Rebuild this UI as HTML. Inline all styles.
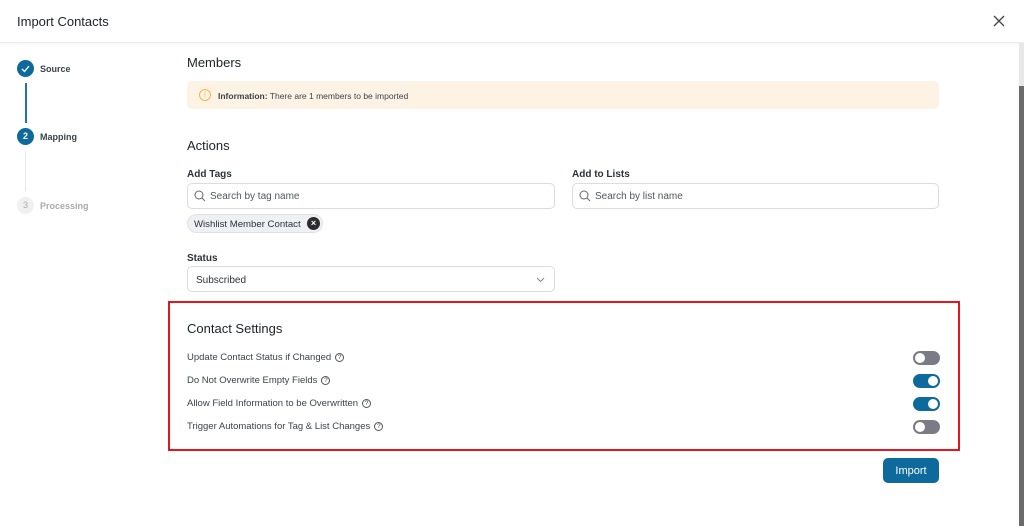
<!DOCTYPE html>
<html><head><style>
*{box-sizing:border-box;margin:0;padding:0}
body{width:1024px;height:526px;overflow:hidden;background:#fff;font-family:"Liberation Sans",sans-serif;color:#1d2327;position:relative}
.abs{position:absolute}
.hdr{left:0;top:0;width:1024px;height:43px;border-bottom:1px solid #ececec;box-shadow:0 2px 4px rgba(0,0,0,.04)}
.t{font-size:13px}
.lbl{font-size:10px;font-weight:bold;color:#2c3338}
.inp{border:1px solid #dcdcde;border-radius:5px;height:26px;background:#fff}
.ph{font-size:10px;color:#50575e}
.tog{width:27px;height:14px;border-radius:7px}
.tog i{position:absolute;top:2px;width:10px;height:10px;border-radius:50%;background:#fff}
.row{font-size:9.5px;color:#3c434a}
.q{display:inline-block;width:9px;height:9px;border:1px solid #555;border-radius:50%;font-size:6.5px;text-align:center;line-height:8px;vertical-align:1px;margin-left:4px}
</style></head><body>
<div class="abs hdr"></div>
<div class="abs t" style="left:17px;top:14px;font-size:13px;color:#1d2327">Import Contacts</div>
<svg class="abs" style="left:993px;top:15px" width="12" height="12"><path d="M1 1L11 11M11 1L1 11" stroke="#444" stroke-width="1.3"/></svg>
<div class="abs" style="left:1019px;top:43px;width:5px;height:483px;background:#e8e8e8"></div>
<div class="abs" style="left:1019px;top:86px;width:5px;height:440px;background:#6b6b6b"></div>

<div class="abs" style="left:17px;top:60px;width:17px;height:17px;border-radius:50%;background:#0e6a9c"></div>
<svg class="abs" style="left:21px;top:64px" width="9" height="9"><path d="M1 5L3.5 7.5L8 2" stroke="#fff" stroke-width="1.3" fill="none"/></svg>
<div class="abs lbl" style="left:40px;top:64px;font-size:9px;color:#3c434a">Source</div>
<div class="abs" style="left:25px;top:83px;width:2px;height:40px;background:#2271b1"></div>
<div class="abs" style="left:17px;top:128px;width:17px;height:17px;border-radius:50%;background:#0e6a9c;color:#fff;font-size:9px;font-weight:bold;text-align:center;line-height:17px">2</div>
<div class="abs lbl" style="left:40px;top:132px;font-size:9px;color:#3c434a">Mapping</div>
<div class="abs" style="left:25px;top:151px;width:1px;height:40px;background:#e6e8ec"></div>
<div class="abs" style="left:17px;top:197px;width:17px;height:17px;border-radius:50%;background:#f0f0f1;color:#a7aaad;font-size:9px;text-align:center;line-height:17px">3</div>
<div class="abs lbl" style="left:40px;top:201px;font-size:9px;color:#a7aaad">Processing</div>

<div class="abs" style="left:187px;top:55px;font-size:13px">Members</div>
<div class="abs" style="left:187px;top:81px;width:752px;height:28px;background:#fdf3e5;border-radius:5px"></div>
<div class="abs" style="left:199px;top:89px;width:12px;height:12px;border:1px solid #f0b849;border-radius:50%;color:#f0b849;font-size:8px;text-align:center;line-height:10px">i</div>
<div class="abs" style="left:218px;top:91px;font-size:8.5px;color:#3c434a"><b>Information:</b> There are 1 members to be imported</div>

<div class="abs" style="left:187px;top:138px;font-size:13px">Actions</div>
<div class="abs lbl" style="left:187px;top:169px">Add Tags</div>
<div class="abs inp" style="left:187px;top:183px;width:368px"></div>
<svg class="abs" style="left:194px;top:190px" width="12" height="12"><circle cx="5" cy="5" r="4" stroke="#666" fill="none"/><path d="M8 8L11 11" stroke="#666"/></svg>
<div class="abs ph" style="left:210px;top:191px">Search by tag name</div>
<div class="abs lbl" style="left:572px;top:169px">Add to Lists</div>
<div class="abs inp" style="left:572px;top:183px;width:367px"></div>
<svg class="abs" style="left:579px;top:190px" width="12" height="12"><circle cx="5" cy="5" r="4" stroke="#666" fill="none"/><path d="M8 8L11 11" stroke="#666"/></svg>
<div class="abs ph" style="left:595px;top:191px">Search by list name</div>
<div class="abs" style="left:187px;top:214px;width:136px;height:19px;border-radius:10px;background:#eef0f3;border:1px solid #e0e2e6"></div>
<div class="abs ph" style="left:194px;top:219px;color:#2c3338;font-size:9.6px">Wishlist Member Contact</div>
<div class="abs" style="left:307px;top:217px;width:13px;height:13px;border-radius:50%;background:#2c2c2c;color:#fff;font-size:9px;text-align:center;line-height:13px;font-weight:bold">×</div>
<div class="abs lbl" style="left:187px;top:253px">Status</div>
<div class="abs inp" style="left:187px;top:266px;width:368px"></div>
<div class="abs ph" style="left:196px;top:275px;color:#2c3338">Subscribed</div>
<svg class="abs" style="left:536px;top:277px" width="9" height="6"><path d="M1 1L4.5 4.5L8 1" stroke="#888" fill="none"/></svg>

<div class="abs" style="left:168px;top:301px;width:792px;height:150px;border:2px solid #e5161d"></div>
<div class="abs" style="left:187px;top:321px;font-size:13px">Contact Settings</div>
<div class="abs row" style="left:187px;top:352px">Update Contact Status if Changed<span class="q">?</span></div>
<div class="abs row" style="left:187px;top:375px">Do Not Overwrite Empty Fields<span class="q">?</span></div>
<div class="abs row" style="left:187px;top:398px">Allow Field Information to be Overwritten<span class="q">?</span></div>
<div class="abs row" style="left:187px;top:421px">Trigger Automations for Tag &amp; List Changes<span class="q">?</span></div>
<div class="abs tog" style="left:913px;top:351px;background:#7b7b86"><i style="left:2px"></i></div>
<div class="abs tog" style="left:913px;top:374px;background:#0e6a9c"><i style="right:2px"></i></div>
<div class="abs tog" style="left:913px;top:397px;background:#0e6a9c"><i style="right:2px"></i></div>
<div class="abs tog" style="left:913px;top:420px;background:#7b7b86"><i style="left:2px"></i></div>

<div class="abs" style="left:883px;top:458px;width:56px;height:25px;background:#0e6a9c;border-radius:5px;color:#fff;font-size:11px;text-align:center;line-height:27px">Import</div>
</body></html>
